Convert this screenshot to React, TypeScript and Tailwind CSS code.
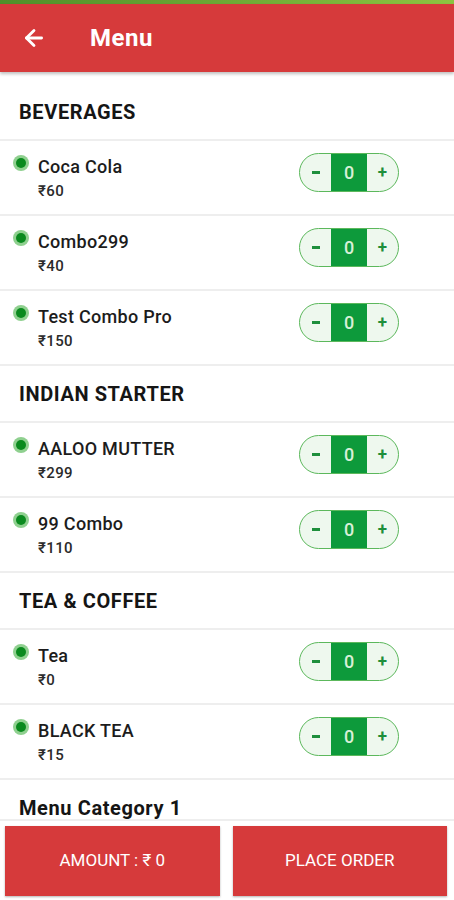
import { ArrowLeft } from "lucide-react";

type item = {
  name: string;
  price: number;
};

type section = {
  title: string;
  items: item[];
};

const sections: section[] = [
  {
    title: "BEVERAGES",
    items: [
      { name: "Coca Cola", price: 60 },
      { name: "Combo299", price: 40 },
      { name: "Test Combo Pro", price: 150 },
    ],
  },
  {
    title: "INDIAN STARTER",
    items: [
      { name: "AALOO MUTTER", price: 299 },
      { name: "99 Combo", price: 110 },
    ],
  },
  {
    title: "TEA & COFFEE",
    items: [
      { name: "Tea", price: 0 },
      { name: "BLACK TEA", price: 15 },
    ],
  },
];

function Stepper() {
  return (
    <div className="mt-[12px] flex h-[39px] w-[100px] overflow-hidden rounded-full border-[1.5px] border-[#5cb85c] bg-[#eef8ee]">
      <div className="flex w-[31px] items-center justify-center">
        <div className="h-[2.5px] w-[8px] bg-[#1e8f3c]" />
      </div>
      <div className="flex flex-1 items-center justify-center bg-[#0d9a3b] text-[18px] font-medium text-[#d8f0d8]">
        0
      </div>
      <div className="flex w-[31px] items-center justify-center text-[17px] font-bold text-[#1e8f3c]">
        +
      </div>
    </div>
  );
}

function Row({ it }: { it: item }) {
  return (
    <div className="flex h-[75px] items-start border-b-2 border-[#eeeeee] pr-[55px]">
      <div className="flex flex-1 items-start pt-[13px]">
        <div className="ml-[13px] mr-[9px] mt-[1px] flex h-[16px] w-[16px] items-center justify-center rounded-full bg-[#8fd08f]">
          <div className="h-[10px] w-[10px] rounded-full bg-[#0a8a1e]" />
        </div>
        <div className="flex flex-col">
          <span className="text-[18px] leading-[25px] font-medium tracking-[0.3px] text-[#1c1c1c]">
            {it.name}
          </span>
          <span className="text-[15px] leading-[24px] font-medium tracking-[0.4px] text-[#2a2a2a]">
            ₹{it.price}
          </span>
        </div>
      </div>
      <Stepper />
    </div>
  );
}

function App() {
  return (
    <div
      className="relative h-[900px] w-[454px] overflow-hidden bg-white"
      style={{ fontFamily: "Roboto, 'Noto Sans', sans-serif" }}
    >
      <div className="h-[4px] bg-gradient-to-r from-[#4f8f2a] to-[#8cc441]" />
      <div className="flex h-[68px] items-center bg-[#d63a3b] shadow-[0_2px_3px_rgba(0,0,0,0.25)]">
        <ArrowLeft className="ml-[21px] text-white" size={26} strokeWidth={2.6} />
        <span className="ml-[43px] text-[24px] font-bold tracking-[0.5px] text-white">
          Menu
        </span>
      </div>
      <div className="pt-[12px]">
        {sections.map((s) => {
          return (
            <div key={s.title}>
              <div className="flex h-[57px] items-center border-b-2 border-[#eeeeee] pl-[19px] text-[20px] font-bold tracking-[0.6px] text-[#151515]">
                {s.title}
              </div>
              {s.items.map((it) => {
                return <Row key={it.name} it={it} />;
              })}
            </div>
          );
        })}
        <div className="flex h-[57px] items-center border-b-2 border-[#eeeeee] pl-[19px] text-[20px] font-bold tracking-[0.6px] text-[#151515]">
          Menu Category 1
        </div>
      </div>
      <div className="absolute bottom-0 left-0 right-0 flex h-[81px] gap-[13px] border-t-2 border-[#eeeeee] bg-white pr-[7px] pl-[5px] pt-[5px] pb-[4px]">
        <div className="flex flex-1 items-center justify-center bg-[#d63a3b] text-[17px] text-white shadow-[0_1px_2px_rgba(0,0,0,0.3)]">
          AMOUNT : ₹ 0
        </div>
        <div className="flex flex-1 items-center justify-center bg-[#d63a3b] text-[17px] text-white shadow-[0_1px_2px_rgba(0,0,0,0.3)]">
          PLACE ORDER
        </div>
      </div>
    </div>
  );
}

export default App;
